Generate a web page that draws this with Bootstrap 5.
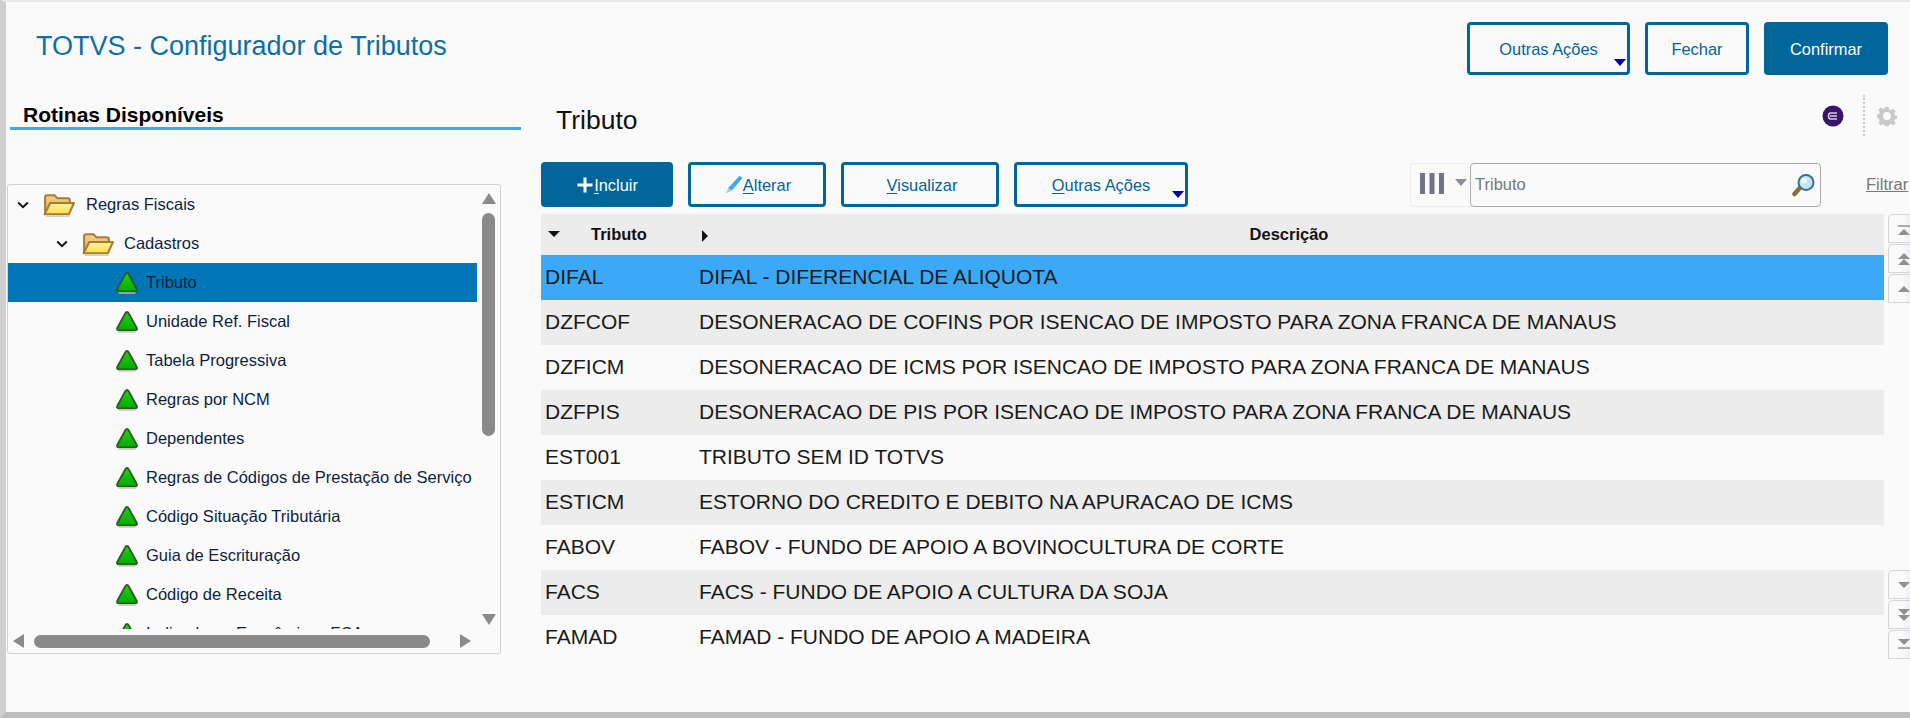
<!DOCTYPE html>
<html lang="pt-BR">
<head>
<meta charset="utf-8">
<title>TOTVS - Configurador de Tributos</title>
<link href="https://cdn.jsdelivr.net/npm/bootstrap@5.3.0/dist/css/bootstrap.min.css" rel="stylesheet">
<style>
html,body{height:718px;overflow:hidden}
body{font-family:"Liberation Sans",Arial,sans-serif;background:#fafafa;color:#111;margin:0}
.shell{height:718px;border-top:2px solid #e9e9e9;border-left:6px solid #cfcfcf;border-bottom:6px solid #bdbdbd;display:flex;flex-direction:column;overflow:hidden}
.topbar{height:88px;flex:none;display:flex;justify-content:space-between;align-items:flex-start;padding:20px 22px 0 30px}
.app-title{font-size:27px;font-weight:400;color:#0f6ea3;margin:8px 0 0;line-height:32px}
.top-acts{display:flex;gap:15px}
.tb-btn{--bs-btn-border-radius:4px;font-size:16.4px;line-height:20px;padding:0;display:flex;align-items:center;justify-content:center;position:relative;border-width:3px;border-style:solid;border-color:#006598;color:#006598;background:#fafafa;box-shadow:none}
.tb-btn:hover{background:#fafafa;color:#006598;border-color:#006598}
.tb-solid,.tb-solid:hover{background:#006598;color:#fff}
.tb-top{height:53px}
.w-outras{width:163px}.w-fechar{width:104px}.w-conf{width:124px}
.drop-mark{position:absolute;right:1px;bottom:6px;width:0;height:0;border-left:6px solid transparent;border-right:6px solid transparent;border-top:7px solid #000099}
.work{flex:1;display:flex;min-height:0}
.side{width:515px;flex:none;padding-left:4px}
.side-h{font-size:21px;font-weight:700;color:#000;line-height:24px;padding:13px 0 0 13px;border-bottom:3px solid #3ca8f5;box-sizing:content-box;height:24px}
.tree{margin:54px 0 0 -3px;width:494px;height:470px;border:1px solid #cfcfcf;border-radius:3px;display:flex;background:#fafafa}
.tree-main{width:469px;flex:none;display:flex;flex-direction:column}
.tree-rows{height:445px;overflow:hidden;white-space:nowrap}
.tree-row{height:39px;display:flex;align-items:center;font-size:16.5px;color:#0d1f3d}
.lv0{padding-left:9px}.lv1{padding-left:48px}.lv2{padding-left:108px}
.tree-sel{background:#0076b6}
.ti-gap{margin-right:8px}
.fold{margin:0 10px 0 13px}
.lv0 .fold{margin-right:11px}
.hbar{height:24px;display:flex;align-items:center;padding:0 6px 0 5px}
.hthumb{width:396px;height:13px;background:#8a8a8a;border-radius:7px;margin:0 30px 0 10px}
.vbar{width:23px;flex:none;display:flex;flex-direction:column;align-items:center;height:445px;padding-top:8px}
.vthumb{width:13px;height:223px;background:#8a8a8a;border-radius:7px;margin:9px 0 178px}
.arrow{width:0;height:0;flex:none}
.ar-up{border-left:7px solid transparent;border-right:7px solid transparent;border-bottom:11px solid #8a8a8a}
.ar-dn{border-left:7px solid transparent;border-right:7px solid transparent;border-top:11px solid #8a8a8a}
.ar-l{border-top:7px solid transparent;border-bottom:7px solid transparent;border-right:11px solid #8a8a8a}
.ar-r{border-top:7px solid transparent;border-bottom:7px solid transparent;border-left:11px solid #8a8a8a}
.panel{width:1345px;flex:none;margin-left:20px;display:flex;flex-direction:column}
.panel-wrap{display:flex;flex:1;min-width:0}
.p-head{height:72px;display:flex;align-items:flex-start;justify-content:space-between}
.p-title{font-size:26.5px;font-weight:400;color:#111;margin:15px 0 0 15px;line-height:30px}
.toolbar{display:flex;height:45px;align-items:flex-start}
.tb-row{height:45px}
.w-inc{width:132px;margin-right:15px}.w-alt{width:138px;margin-right:15px;padding-left:2px}.w-vis{width:158px;margin-right:15px;padding-left:4px}.w-out2{width:174px}
.tb-row u{text-underline-offset:2px}
.search-area{margin-left:auto;display:flex;align-items:center;height:45px;margin-right:-23px}
.col-pick{width:60px;height:44px;border:1px solid #ececec;border-right:0;border-radius:4px 0 0 4px;display:flex;align-items:flex-start;padding:9px 0 0 9px;gap:11px}
.col-caret{width:0;height:0;flex:none;margin-top:6px;border-left:6px solid transparent;border-right:6px solid transparent;border-top:7px solid #8a8d9c}
.s-box{width:351px;height:44px;border:1px solid #aaa;border-radius:4px;display:flex;align-items:center;justify-content:space-between;padding:0 4px 0 4px;font-size:16.5px;color:#777;background:#fafafa}
.filter-lnk{color:#777;font-size:16.5px;margin-left:45px;text-decoration:underline;width:43px}
.tbl-area{height:446px;margin-top:7px}
.grid-tbl{--bs-table-bg:transparent;--bs-table-color:#1a1a1a;table-layout:fixed;width:1343px;margin:0;font-size:21px}
.grid-tbl td,.grid-tbl th{border:0;padding:0 5px;height:45px;vertical-align:middle;line-height:22px;white-space:nowrap;overflow:hidden}
.grid-tbl tbody td{padding-bottom:2px}
.grid-tbl tbody td:first-child{padding-left:4px}
.grid-tbl thead th{height:41px;background:#ececec;font-size:16.5px;font-weight:700;color:#111;text-align:center;position:relative;padding-bottom:2px}
.zeb{--bs-table-bg:#ececec}
.selr{--bs-table-bg:#3ca9f7}
.cw1{width:153px}
.h-dn{display:inline-block;border-left:6px solid transparent;border-right:6px solid transparent;border-top:6px solid #111;position:absolute;left:7px;top:17px}
.h-rt{display:inline-block;border-top:6px solid transparent;border-bottom:6px solid transparent;border-left:6px solid #111;position:absolute;left:8px;top:16px}
.h-tri{padding-left:50px!important;text-align:left!important}
.pager-col{margin-top:124px}
.pager{margin-left:2px;width:24px;height:446px;display:flex;flex-direction:column;flex:none}
.pg-btn{height:29px;margin-bottom:1px;flex:none;border:1px solid #d5d5d5;border-right:0;border-radius:5px 0 0 0;display:flex;flex-direction:column;align-items:flex-start;justify-content:center;padding-left:9px;background:linear-gradient(90deg,#fafafa 60%,#e6eef2)}
.pg-gap{flex:1}
.tr-u{width:0;height:0;border-left:6px solid transparent;border-right:6px solid transparent;border-bottom:6px solid #909090}
.tr-d{width:0;height:0;border-left:6px solid transparent;border-right:6px solid transparent;border-top:6px solid #909090}
.bar-l{width:13px;height:2px;background:#aaa;margin:2px 0}
.util{display:flex;align-items:center;height:41px;margin-top:5px;margin-right:-11px}
.dots{height:41px;border-left:2px dotted #ccc;margin:0 12px 0 19px}
</style>
</head>
<body>
<svg width="0" height="0" class="d-block position-absolute" aria-hidden="true">
<defs>
<linearGradient id="gg" x1="0" y1="0" x2="0" y2="1"><stop offset="0" stop-color="#22d016"/><stop offset="1" stop-color="#04ab00"/></linearGradient>
<linearGradient id="fb" x1="0" y1="0" x2="0" y2="1"><stop offset="0" stop-color="#f2d283"/><stop offset="1" stop-color="#d9ae5a"/></linearGradient>
<linearGradient id="ff" x1="0" y1="0" x2="0" y2="1"><stop offset="0" stop-color="#fff6a0"/><stop offset="1" stop-color="#fbdc45"/></linearGradient>
<symbol id="tri" viewBox="0 0 22 22"><path d="M11 1Q12 1 12.8 2.5L20.8 17Q21.6 19.4 19 19.4H3Q.4 19.4 1.2 17L9.2 2.5Q10 1 11 1Z" fill="url(#gg)" stroke="#2d5a25" stroke-width="1.8" stroke-linejoin="round"/><path d="M2.5 21H19.5" stroke="#c9bdb8" stroke-width="1.4"/></symbol>
<symbol id="fold" viewBox="0 0 32 24"><path d="M3 21V5Q3 3 5 3H12L15 6H25Q27 6 27 8V11H9L4 21Z" fill="url(#fb)" stroke="#a67d38" stroke-width="2" stroke-linejoin="round"/><path d="M8 10.5H31L26 21.5H2.5Z" fill="url(#ff)" stroke="#a67d38" stroke-width="2" stroke-linejoin="round"/><path d="M4 23.4H27" stroke="#cfc9bf" stroke-width="1.2"/></symbol>
<symbol id="chev" viewBox="0 0 12 8"><path d="M1.2 1.5 6 6.2 10.8 1.5" fill="none" stroke="#111" stroke-width="2"/></symbol>
</defs>
</svg>
<div class="shell">
  <div class="topbar">
    <h1 class="app-title">TOTVS - Configurador de Tributos</h1>
    <div class="top-acts">
      <button class="btn tb-btn tb-top w-outras">Outras Ações<span class="drop-mark"></span></button>
      <button class="btn tb-btn tb-top w-fechar">Fechar</button>
      <button class="btn tb-btn tb-solid tb-top w-conf">Confirmar</button>
    </div>
  </div>
  <div class="work">
    <div class="side">
      <div class="side-h">Rotinas Disponíveis</div>
      <div class="tree">
        <div class="tree-main">
          <div class="tree-rows">
            <div class="tree-row lv0"><svg width="12" height="8"><use href="#chev"/></svg><svg class="fold" width="33" height="25"><use href="#fold"/></svg>Regras Fiscais</div>
            <div class="tree-row lv1"><svg width="12" height="8"><use href="#chev"/></svg><svg class="fold" width="33" height="25"><use href="#fold"/></svg>Cadastros</div>
            <div class="tree-row lv2 tree-sel"><svg class="ti-gap" width="22" height="22"><use href="#tri"/></svg>Tributo</div>
            <div class="tree-row lv2"><svg class="ti-gap" width="22" height="22"><use href="#tri"/></svg>Unidade Ref. Fiscal</div>
            <div class="tree-row lv2"><svg class="ti-gap" width="22" height="22"><use href="#tri"/></svg>Tabela Progressiva</div>
            <div class="tree-row lv2"><svg class="ti-gap" width="22" height="22"><use href="#tri"/></svg>Regras por NCM</div>
            <div class="tree-row lv2"><svg class="ti-gap" width="22" height="22"><use href="#tri"/></svg>Dependentes</div>
            <div class="tree-row lv2"><svg class="ti-gap" width="22" height="22"><use href="#tri"/></svg>Regras de Códigos de Prestação de Serviço</div>
            <div class="tree-row lv2"><svg class="ti-gap" width="22" height="22"><use href="#tri"/></svg>Código Situação Tributária</div>
            <div class="tree-row lv2"><svg class="ti-gap" width="22" height="22"><use href="#tri"/></svg>Guia de Escrituração</div>
            <div class="tree-row lv2"><svg class="ti-gap" width="22" height="22"><use href="#tri"/></svg>Código de Receita</div>
            <div class="tree-row lv2"><svg class="ti-gap" width="22" height="22"><use href="#tri"/></svg>Indicadores Econômicos FCA</div>
          </div>
          <div class="hbar"><span class="arrow ar-l"></span><span class="hthumb"></span><span class="arrow ar-r"></span></div>
        </div>
        <div class="vbar"><span class="arrow ar-up"></span><span class="vthumb"></span><span class="arrow ar-dn"></span></div>
      </div>
    </div>
    <div class="panel-wrap">
      <div class="panel">
        <div class="p-head">
          <h2 class="p-title">Tributo</h2>
          <div class="util">
            <svg width="22" height="22" viewBox="0 0 22 22"><circle cx="11" cy="11" r="10.5" fill="#3a1466"/><path d="M15 8H8.5Q6.5 8 6.5 11T8.5 14H15M8 11H15" fill="none" stroke="#cfd2dc" stroke-width="1.6"/></svg>
            <span class="dots"></span>
            <svg width="20" height="20" viewBox="0 0 20 20"><path fill-rule="evenodd" d="M8.2 1h3.6l.5 2.6 1.7.7 2.2-1.5 2.5 2.5-1.5 2.2.7 1.7 2.1.5v3l-2.1.5-.7 1.7 1.5 2.2-2.5 2.5-2.2-1.5-1.7.7-.5 2.6H8.2l-.5-2.6-1.7-.7-2.2 1.5-2.5-2.5 1.5-2.2-.7-1.7L0 11.5v-3l2.1-.5.7-1.7-1.5-2.2 2.5-2.5 2.2 1.5 1.7-.7zM10 6a4 4 0 1 0 0 8 4 4 0 0 0 0-8z" fill="#c9c9c9"/></svg>
          </div>
        </div>
        <div class="toolbar">
          <button class="btn tb-btn tb-solid tb-row w-inc"><svg width="18" height="18" viewBox="0 0 18 18"><path d="M9 1.5V16.5M1.5 9H16.5" stroke="#fff" stroke-width="3"/></svg><span><u>I</u>ncluir</span></button>
          <button class="btn tb-btn tb-row w-alt"><svg width="18" height="20" viewBox="0 0 18 20"><path d="M14.5 .8 17.5 3 6.8 15.5 3.2 13Z" fill="#3ca9f5"/><path d="M3.2 13 6.8 15.5 1 18.5Z" fill="#9cc9ea"/></svg><span><u>A</u>lterar</span></button>
          <button class="btn tb-btn tb-row w-vis"><span><u>V</u>isualizar</span></button>
          <button class="btn tb-btn tb-row w-out2"><span><u>O</u>utras Ações</span><span class="drop-mark"></span></button>
          <div class="search-area">
            <div class="col-pick">
              <svg width="24" height="21" viewBox="0 0 24 21"><path d="M0 0h5v21H0zM9.5 0h5v21h-5zM19 0h5v21h-5z" fill="#6f7385"/></svg>
              <span class="col-caret"></span>
            </div>
            <div class="s-box"><span>Tributo</span>
              <svg width="24" height="24" viewBox="0 0 24 24"><path d="M8.5 14 2.5 21" stroke="#8c6f3f" stroke-width="4.5" stroke-linecap="round"/><circle cx="14" cy="9.5" r="7.5" fill="#bfe6f7" stroke="#3d6f8f" stroke-width="2"/><circle cx="12" cy="7.5" r="3" fill="#eef9fe"/></svg>
            </div>
            <a class="filter-lnk" href="#">Filtrar</a>
          </div>
        </div>
        <div class="tbl-area">
          <table class="table grid-tbl">
            <colgroup><col class="cw1"><col></colgroup>
            <thead><tr><th class="h-tri"><span class="h-dn"></span>Tributo</th><th><span class="h-rt"></span>Descrição</th></tr></thead>
            <tbody>
              <tr class="selr"><td>DIFAL</td><td>DIFAL - DIFERENCIAL DE ALIQUOTA</td></tr>
              <tr class="zeb"><td>DZFCOF</td><td>DESONERACAO DE COFINS POR ISENCAO DE IMPOSTO PARA ZONA FRANCA DE MANAUS</td></tr>
              <tr><td>DZFICM</td><td>DESONERACAO DE ICMS POR ISENCAO DE IMPOSTO PARA ZONA FRANCA DE MANAUS</td></tr>
              <tr class="zeb"><td>DZFPIS</td><td>DESONERACAO DE PIS POR ISENCAO DE IMPOSTO PARA ZONA FRANCA DE MANAUS</td></tr>
              <tr><td>EST001</td><td>TRIBUTO SEM ID TOTVS</td></tr>
              <tr class="zeb"><td>ESTICM</td><td>ESTORNO DO CREDITO E DEBITO NA APURACAO DE ICMS</td></tr>
              <tr><td>FABOV</td><td>FABOV - FUNDO DE APOIO A BOVINOCULTURA DE CORTE</td></tr>
              <tr class="zeb"><td>FACS</td><td>FACS - FUNDO DE APOIO A CULTURA DA SOJA</td></tr>
              <tr><td>FAMAD</td><td>FAMAD - FUNDO DE APOIO A MADEIRA</td></tr>
            </tbody>
          </table>
        </div>
      </div>
      <div class="pager-col">
        <div class="pager">
          <div class="pg-btn"><span class="bar-l"></span><span class="tr-u"></span></div>
          <div class="pg-btn"><span class="tr-u"></span><span class="tr-u"></span></div>
          <div class="pg-btn"><span class="tr-u"></span></div>
          <div class="pg-gap"></div>
          <div class="pg-btn"><span class="tr-d"></span></div>
          <div class="pg-btn"><span class="tr-d"></span><span class="tr-d"></span></div>
          <div class="pg-btn"><span class="tr-d"></span><span class="bar-l"></span></div>
        </div>
      </div>
    </div>
  </div>
</div>
</body>
</html>
